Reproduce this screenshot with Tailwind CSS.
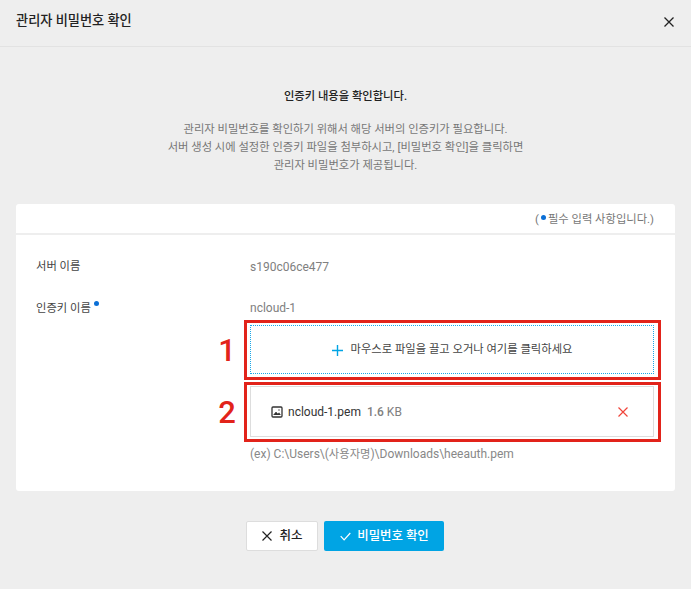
<!DOCTYPE html>
<html lang="ko">
<head>
    <meta charset="UTF-8">
    <title>관리자 비밀번호 확인</title>
    <script src="https://cdn.jsdelivr.net/npm/@tailwindcss/browser@4"></script>
</head>
<body class="bg-[#eeeeee] h-[589px] overflow-hidden font-['Roboto','Noto_Sans_CJK_KR',sans-serif] text-[11.3px] text-[#777]">
    <!-- header -->
    <div class="h-[47px] flex items-center justify-between pl-4 pr-4 border-b border-[#e2e2e2]">
        <h1 class="text-[13.2px] font-medium text-[#222] -mt-1">관리자 비밀번호 확인</h1>
        <svg class="w-[12px] h-[12px] -mt-0.5" viewBox="0 0 12 12" fill="none" stroke="#222" stroke-width="1.3"><path d="M1.5 1.5l9 9M10.5 1.5l-9 9"/></svg>
    </div>

    <div class="text-center pt-[36px]">
        <p class="font-medium text-[#222] leading-[28px]">인증키 내용을 확인합니다.</p>
        <div class="mt-[10px] leading-[18px] text-[#777]">
            <p>관리자 비밀번호를 확인하기 위해서 해당 서버의 인증키가 필요합니다.</p>
            <p>서버 생성 시에 설정한 인증키 파일을 첨부하시고, [비밀번호 확인]을 클릭하면</p>
            <p>관리자 비밀번호가 제공됩니다.</p>
        </div>
    </div>

    <!-- form card -->
    <div class="relative mx-4 mt-[29px] w-[659px] h-[287px] bg-white rounded-[3px]">
        <div class="h-[31px] border-b-2 border-[#eeeeee] flex items-center justify-end pr-[21px] pt-[3px] text-[#777]">
            <span>(<span class="inline-block w-[5px] h-[5px] rounded-full bg-[#0b6fd6] ml-[2px] mr-[2px] align-[3px]"></span>필수 입력 사항입니다.)</span>
        </div>
        <div class="grid grid-cols-[214px_404px] pl-[20px] pt-[23px]">
            <div class="text-[#444] leading-[18px]">서버 이름</div>
            <div class="leading-[18px] text-[12px] text-[#808080]">s190c06ce477</div>
            <div class="text-[#444] leading-[18px] mt-[24px]">인증키 이름<span class="inline-block w-[5px] h-[5px] rounded-full bg-[#0b6fd6] ml-[3px] align-[6px]"></span></div>
            <div class="leading-[18px] text-[12px] mt-[23px] text-[#808080]">ncloud-1</div>
            <div></div>
            <div class="mt-[7px]">
                <div class="h-[49px] border border-dotted border-[#1aa7e8] flex items-center justify-center gap-2 pt-[2px] text-[#444]">
                    <svg class="w-[11px] h-[11px]" viewBox="0 0 11 11" fill="none" stroke="#00a4e4" stroke-width="1.4"><path d="M5.5 0v11M0 5.5h11"/></svg>
                    <span>마우스로 파일을 끌고 오거나 여기를 클릭하세요</span>
                </div>
                <div class="mt-[12px] h-[51px] border border-[#dddddd] flex items-center justify-between pl-[20px] pr-[25px]">
                    <div class="flex items-center gap-[5px] text-[12px]">
                        <svg class="w-[12px] h-[12px]" viewBox="0 0 12 12" fill="none" stroke="#333" stroke-width="1.3"><rect x="1" y="1" width="10" height="10" rx="1"/><path d="M2.5 9l2.5-3 1.8 2 1.2-1.2 1.5 2.2" fill="#333" stroke-width=".6"/><circle cx="8" cy="4" r=".7" fill="#333" stroke="none"/></svg>
                        <span class="text-[#333]">ncloud-1.pem</span>
                        <span class="ml-[1px] text-[#808080]"><span class="font-medium">1.6</span> KB</span>
                    </div>
                    <svg class="w-[10px] h-[10px]" viewBox="0 0 10 10" fill="none" stroke="#f0453a" stroke-width="1.2"><path d="M.5.5l9 9M9.5.5l-9 9"/></svg>
                </div>
                <p class="mt-[8px] leading-[18px] text-[12px] text-[#888]">(ex) C:\Users\(<span class="text-[11.3px]">사용자명</span>)\Downloads\heeauth.pem</p>
            </div>
        </div>
    </div>

    <!-- buttons -->
    <div class="flex justify-center gap-[6px] mt-[30px] pr-[2px]">
        <button class="w-[72px] h-[30px] bg-white border border-[#dddddd] rounded-[2px] flex items-center justify-center gap-[7px] pl-[2px] text-[12.5px] font-medium text-[#222]">
            <svg class="w-[10px] h-[10px]" viewBox="0 0 10 10" fill="none" stroke="#222" stroke-width="1.2"><path d="M.5.5l9 9M9.5.5l-9 9"/></svg>
            취소
        </button>
        <button class="w-[120px] h-[30px] bg-[#00a4e4] rounded-[2px] flex items-center justify-center gap-[6px] pl-[2px] text-[12.4px] font-medium text-white">
            <svg class="w-[11px] h-[9px]" viewBox="0 0 11 9" fill="none" stroke="#fff" stroke-width="1.2"><path d="M.7 4.2l3.4 3.6L10.3 1"/></svg>
            비밀번호 확인
        </button>
    </div>

    <!-- annotations drawn over the screenshot -->
    <div class="absolute left-[244px] top-[320px] w-[417px] h-[60px] border-[3px] border-[#e2231a]"></div>
    <div class="absolute left-[244px] top-[382px] w-[417px] h-[60px] border-[3px] border-[#e2231a]"></div>
    <div class="absolute left-[218px] top-[331px] w-[18px] text-center text-[31px] leading-[40px] font-medium text-[#e2231a]">1</div>
    <div class="absolute left-[218px] top-[393px] w-[18px] text-center text-[31px] leading-[40px] font-medium text-[#e2231a]">2</div>
</body>
</html>
